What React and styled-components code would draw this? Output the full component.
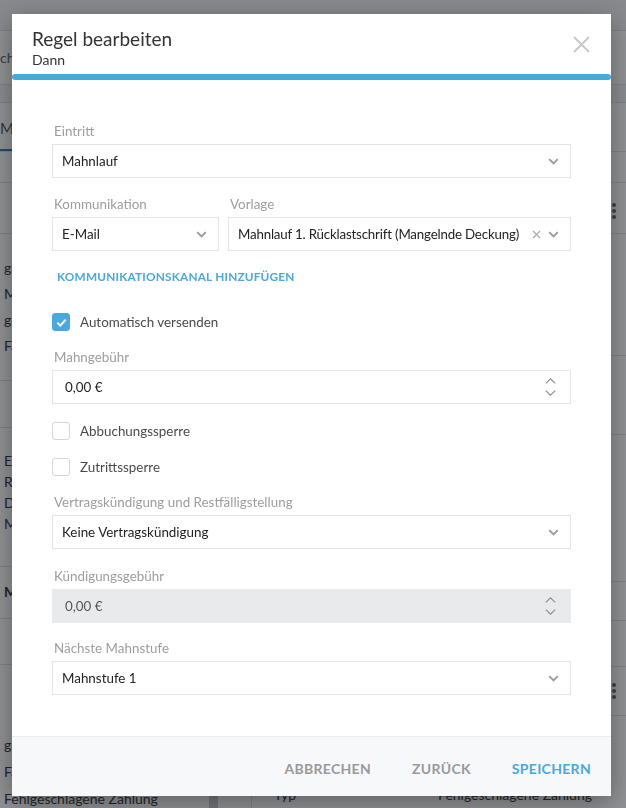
import React from 'react';
import styled, { createGlobalStyle } from 'styled-components';

const GlobalStyle = createGlobalStyle`
  html, body {
    margin: 0;
    padding: 0;
    background: #ffffff;
  }
  * {
    box-sizing: border-box;
  }
  body {
    font-family: Lato, "Open Sans", sans-serif;
    color: #222;
  }
`;

/* ---------- page behind the dialog ---------- */

const Page = styled.div`
  height: 808px;
  overflow: hidden;
  background: #fff;
  display: flex;
  flex-direction: column;
  font-size: 14px;
  color: #333;

  & > * {
    flex-shrink: 0;
  }
`;

const TopStrip = styled.div`
  height: 31px;
  background: #f1f2f4;
  border-bottom: 1px solid #e2e2e2;
`;

const SearchRow = styled.div`
  height: 54px;
  display: flex;
  align-items: center;
  border-bottom: 1px solid #e2e2e2;
  color: #666;
`;

const SubBar = styled.div`
  height: 18px;
  background: #f4f5f7;
  border-bottom: 1px solid #e2e2e2;
`;

const Tabs = styled.div`
  height: 49px;
  display: flex;
  align-items: stretch;
  border-bottom: 1px solid #e2e2e2;
`;

const Tab = styled.div`
  display: flex;
  align-items: center;
  padding: 3px 8px 0 0;
  border-bottom: 2px solid ${({ $active }) => ($active ? '#2f7fb3' : 'transparent')};
  color: #555;
  font-size: 15px;
`;

const Columns = styled.div`
  display: grid;
  grid-template-columns: 209px 9px 34px 1fr;
`;

const ListCol = styled.div`
  display: flex;
  flex-direction: column;
`;

const Scroll = styled.div`
  background: #c9cacc;
`;

const Gap = styled.div`
  border-right: 1px solid #e2e2e2;
`;

const DetailCol = styled.div`
  display: flex;
  flex-direction: column;
`;

const BgRow = styled.div`
  height: ${({ $h }) => $h}px;
  flex-shrink: 0;
  border-bottom: 1px solid #e2e2e2;
  padding: ${({ $pt }) => $pt || 0}px 4px 0 4px;
  display: flex;
  flex-direction: column;
  gap: ${({ $gap }) => $gap || 8}px;
`;

const BgText = styled.div`
  line-height: 18px;
  font-weight: ${({ $bold }) => ($bold ? 700 : 400)};
  white-space: nowrap;
`;

const DetailLine = styled.div`
  display: flex;
  justify-content: space-between;
  padding: 0 30px 0 18px;
  white-space: nowrap;
`;

const Kebab = styled.div`
  align-self: flex-end;
  margin-right: 6px;
  display: flex;
  flex-direction: column;
  gap: 2px;
  span {
    width: 4px;
    height: 4px;
    border-radius: 50%;
    background: #666;
  }
`;

const leftRows = [
  { h: 31, lines: [] },
  { h: 51, lines: [] },
  { h: 147, pt: 25, gap: 8, lines: ['gesendet', 'Mahnung', 'gebucht', 'Fälligkeit'] },
  { h: 47, lines: [] },
  { h: 139, pt: 24, gap: 3, lines: ['E-Mail', 'Rückl.', 'Deckung', 'Mahnlauf'] },
  { h: 52, pt: 16, lines: [{ t: 'Mahnstufe', bold: true }] },
  { h: 46, lines: [] },
  { h: 150, pt: 71, gap: 9, lines: ['gesendet', 'Fälligkeit', 'Fehlgeschlagene Zahlung'] },
];

const rightRows = [
  { h: 31 },
  { h: 51, kebab: true, pt: 20 },
  { h: 122 },
  { h: 79 },
  { h: 147, pt: 103, line: ['', '))'] },
  { h: 39 },
  { h: 46 },
  { h: 49, kebab: true, pt: 16 },
  { h: 100, pt: 70, line: ['Typ', 'Fehlgeschlagene Zahlung'] },
];

const Background = () => (
  <Page>
    <TopStrip />
    <SearchRow>
      <BgText>chen</BgText>
    </SearchRow>
    <SubBar />
    <Tabs>
      <Tab $active>Mahn</Tab>
    </Tabs>
    <Columns>
      <ListCol>
        {leftRows.map((r, i) => (
          <BgRow key={i} $h={r.h} $pt={r.pt} $gap={r.gap}>
            {r.lines.map((l, j) =>
              typeof l === 'string' ? (
                <BgText key={j}>{l}</BgText>
              ) : (
                <BgText key={j} $bold={l.bold}>{l.t}</BgText>
              )
            )}
          </BgRow>
        ))}
      </ListCol>
      <Scroll />
      <Gap />
      <DetailCol>
        {rightRows.map((r, i) => (
          <BgRow key={i} $h={r.h} $pt={r.pt}>
            {r.kebab && (
              <Kebab>
                <span />
                <span />
                <span />
              </Kebab>
            )}
            {r.line && (
              <DetailLine>
                <span>{r.line[0]}</span>
                <span>{r.line[1]}</span>
              </DetailLine>
            )}
          </BgRow>
        ))}
      </DetailCol>
    </Columns>
  </Page>
);

/* ---------- dialog ---------- */

const Overlay = styled.div`
  position: fixed;
  inset: 0;
  background: rgba(18, 22, 28, 0.47);
  padding: 14px 15px 0 12px;
  display: flex;
  align-items: flex-start;
`;

const Modal = styled.div`
  width: 599px;
  background: #fff;
  box-shadow: 0 6px 24px rgba(0, 0, 0, 0.35);
  display: flex;
  flex-direction: column;
  font-family: Lato, "Open Sans", sans-serif;
`;

const Header = styled.div`
  display: flex;
  justify-content: space-between;
  align-items: flex-start;
  padding: 14px 20px 0 20px;
`;

const Titles = styled.div`
  display: flex;
  flex-direction: column;
`;

const Title = styled.h2`
  margin: 0;
  font-size: 19px;
  font-weight: 400;
  line-height: 22px;
  color: #333;
`;

const Subtitle = styled.div`
  margin-top: 2px;
  font-size: 14px;
  line-height: 16px;
  color: #333;
`;

const CloseButton = styled.button`
  border: 0;
  background: none;
  padding: 0;
  margin-top: 8px;
  margin-right: 1px;
  display: flex;
  cursor: pointer;
`;

const Progress = styled.div`
  height: 6px;
  margin-top: 6px;
  border-radius: 3px;
  background: #4aa8dc;
`;

const Body = styled.div`
  padding: 43px 40px 41px 40px;
  display: flex;
  flex-direction: column;
`;

const Field = styled.div`
  display: flex;
  flex-direction: column;
  margin-bottom: ${({ $mb }) => ($mb === undefined ? 18 : $mb)}px;
  min-width: 0;
`;

const Label = styled.label`
  font-size: 13.4px;
  line-height: 16px;
  color: #9d9d9d;
  margin: 0 0 5px 2px;
  white-space: nowrap;
`;

const Box = styled.div`
  height: 34px;
  border: 1px solid ${({ $disabled }) => ($disabled ? '#e9eaec' : '#e4e4e4')};
  background: ${({ $disabled }) => ($disabled ? '#e9eaec' : '#fff')};
  display: flex;
  align-items: center;
  padding: 0 11px 0 9px;
  gap: 7px;
`;

const Value = styled.div`
  flex: 1;
  min-width: 0;
  font-size: ${({ $tight }) => ($tight ? 13.3 : 13.4)}px;
  letter-spacing: ${({ $tight }) => ($tight ? '-0.18px' : 'normal')};
  color: ${({ $muted }) => ($muted ? '#555' : '#222')};
  white-space: nowrap;
  overflow: hidden;
  text-overflow: ellipsis;
  padding-left: ${({ $indent }) => $indent || 0}px;
`;

const Row = styled.div`
  display: grid;
  grid-template-columns: 167px 1fr;
  gap: 9px;
`;

const LinkButton = styled.button`
  align-self: flex-start;
  border: 0;
  background: none;
  padding: 0 0 0 5px;
  margin: 0 0 28px 0;
  font-family: inherit;
  font-size: 11.8px;
  line-height: 16px;
  font-weight: 700;
  letter-spacing: 0.2px;
  color: #4aa8dc;
  text-transform: uppercase;
  cursor: pointer;
`;

const CheckRow = styled.label`
  display: flex;
  align-items: center;
  gap: 10px;
  height: 18px;
  margin-bottom: 18px;
  font-size: 13.4px;
  color: #4a4a4a;
`;

const CheckBox = styled.span`
  width: 18px;
  height: 18px;
  border-radius: 3px;
  display: flex;
  align-items: center;
  justify-content: center;
  background: ${({ $checked }) => ($checked ? '#4aa8dc' : '#fff')};
  border: 1px solid ${({ $checked }) => ($checked ? '#4aa8dc' : '#d6d6d6')};
`;

const Spinner = styled.div`
  display: flex;
  flex-direction: column;
  gap: 6px;
  margin-right: 3px;
`;

const Footer = styled.div`
  height: 60px;
  background: #f7f8fa;
  border-top: 1px solid #ececec;
  display: flex;
  align-items: center;
  justify-content: flex-end;
  gap: 25px;
  padding: 4px 12px 0 0;
`;

const FooterButton = styled.button`
  border: 0;
  background: none;
  padding: 6px 8px;
  font-family: inherit;
  font-size: 14px;
  font-weight: 700;
  letter-spacing: 0.3px;
  color: ${({ $primary }) => ($primary ? '#4aa8dc' : '#9a9a9a')};
  text-transform: uppercase;
  cursor: pointer;
`;

const Chevron = () => (
  <svg width="11" height="7" viewBox="0 0 11 7">
    <path d="M1.2 1.2l4.3 4.3 4.3-4.3" fill="none" stroke="#9b9b9b" strokeWidth="1.9" />
  </svg>
);

const ClearIcon = () => (
  <svg width="9" height="9" viewBox="0 0 9 9">
    <path d="M1 1l7 7M8 1l-7 7" stroke="#a8a8a8" strokeWidth="1.1" />
  </svg>
);

const SpinArrows = () => (
  <Spinner>
    <svg width="11" height="6" viewBox="0 0 11 6">
      <path d="M0.8 5.4l4.7-4.6 4.7 4.6" fill="none" stroke="#8c8c8c" strokeWidth="1.1" />
    </svg>
    <svg width="11" height="6" viewBox="0 0 11 6">
      <path d="M0.8 0.6l4.7 4.6 4.7-4.6" fill="none" stroke="#8c8c8c" strokeWidth="1.1" />
    </svg>
  </Spinner>
);

const CheckMark = () => (
  <svg width="11" height="9" viewBox="0 0 11 9">
    <path d="M1.3 4.6l3 3 5.4-6" fill="none" stroke="#fff" strokeWidth="2" />
  </svg>
);

const SelectBox = ({ value, clearable }) => (
  <Box>
    <Value $tight={clearable}>{value}</Value>
    {clearable && <ClearIcon />}
    <Chevron />
  </Box>
);

const NumberBox = ({ value, disabled }) => (
  <Box $disabled={disabled}>
    <Value $muted={disabled} $indent={3}>{value}</Value>
    <SpinArrows />
  </Box>
);

const Check = ({ checked, children }) => (
  <CheckRow>
    <CheckBox $checked={checked}>{checked && <CheckMark />}</CheckBox>
    {children}
  </CheckRow>
);

const App = () => (
  <>
    <GlobalStyle />
    <Background />
    <Overlay>
      <Modal>
        <Header>
          <Titles>
            <Title>Regel bearbeiten</Title>
            <Subtitle>Dann</Subtitle>
          </Titles>
          <CloseButton aria-label="Schließen">
            <svg width="17" height="17" viewBox="0 0 17 17">
              <path d="M1 1l15 15M16 1L1 16" stroke="#c8c8c8" strokeWidth="1.8" />
            </svg>
          </CloseButton>
        </Header>
        <Progress />
        <Body>
          <Field>
            <Label>Eintritt</Label>
            <SelectBox value="Mahnlauf" />
          </Field>

          <Row>
            <Field>
              <Label>Kommunikation</Label>
              <SelectBox value="E-Mail" />
            </Field>
            <Field>
              <Label>Vorlage</Label>
              <SelectBox value="Mahnlauf 1. Rücklastschrift (Mangelnde Deckung)" clearable />
            </Field>
          </Row>

          <LinkButton>Kommunikationskanal hinzufügen</LinkButton>

          <Check checked>Automatisch versenden</Check>

          <Field>
            <Label>Mahngebühr</Label>
            <NumberBox value="0,00 €" />
          </Field>

          <Check>Abbuchungssperre</Check>
          <Check>Zutrittssperre</Check>

          <Field $mb={19}>
            <Label>Vertragskündigung und Restfälligstellung</Label>
            <SelectBox value="Keine Vertragskündigung" />
          </Field>

          <Field $mb={17}>
            <Label>Kündigungsgebühr</Label>
            <NumberBox value="0,00 €" disabled />
          </Field>

          <Field $mb={0}>
            <Label>Nächste Mahnstufe</Label>
            <SelectBox value="Mahnstufe 1" />
          </Field>
        </Body>
        <Footer>
          <FooterButton>Abbrechen</FooterButton>
          <FooterButton>Zurück</FooterButton>
          <FooterButton $primary>Speichern</FooterButton>
        </Footer>
      </Modal>
    </Overlay>
  </>
);

export default App;
